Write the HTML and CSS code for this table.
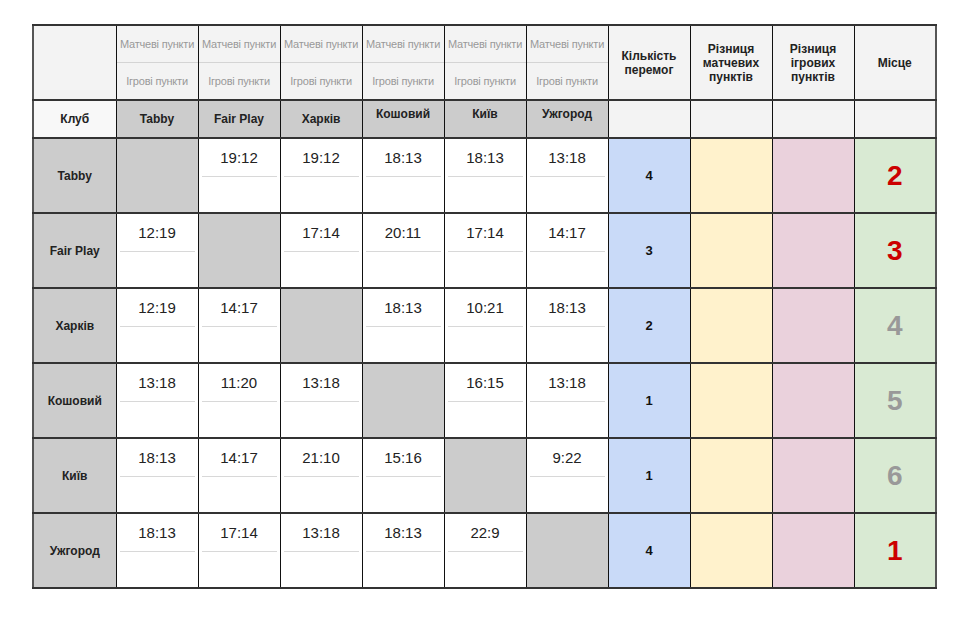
FILE: index.html
```html
<!DOCTYPE html>
<html lang="uk">
<head>
<meta charset="utf-8">
<title>Таблиця</title>
<link rel="stylesheet" href="styles.css">
</head>
<body>
<table class="grid">
  <colgroup>
    <col class="c-first">
    <col class="c"><col class="c"><col class="c"><col class="c"><col class="c"><col class="c">
    <col class="c"><col class="c"><col class="c"><col class="c">
  </colgroup>
  <tr class="r-h1">
    <td class="hd"></td>
    <td class="hd split"><div class="top sub">Матчеві пункти</div><div class="bot sub">Ігрові пункти</div></td>
    <td class="hd split"><div class="top sub">Матчеві пункти</div><div class="bot sub">Ігрові пункти</div></td>
    <td class="hd split"><div class="top sub">Матчеві пункти</div><div class="bot sub">Ігрові пункти</div></td>
    <td class="hd split"><div class="top sub">Матчеві пункти</div><div class="bot sub">Ігрові пункти</div></td>
    <td class="hd split"><div class="top sub">Матчеві пункти</div><div class="bot sub">Ігрові пункти</div></td>
    <td class="hd split"><div class="top sub">Матчеві пункти</div><div class="bot sub">Ігрові пункти</div></td>
    <td class="hd stat-h">Кількість<br>перемог</td>
    <td class="hd stat-h">Різниця<br>матчевих<br>пунктів</td>
    <td class="hd stat-h">Різниця<br>ігрових<br>пунктів</td>
    <td class="hd stat-h">Місце</td>
  </tr>
  <tr class="r-h2">
    <td class="club">Клуб</td>
    <td class="team-h">Tabby</td>
    <td class="team-h">Fair Play</td>
    <td class="team-h">Харків</td>
    <td class="team-h hi">Кошовий</td>
    <td class="team-h hi">Київ</td>
    <td class="team-h hi">Ужгород</td>
    <td class="hd"></td><td class="hd"></td><td class="hd"></td><td class="hd"></td>
  </tr>
  <tr class="r-d">
    <td class="team">Tabby</td>
    <td class="na"></td>
    <td class="sc"><div class="top">19:12</div></td>
    <td class="sc"><div class="top">19:12</div></td>
    <td class="sc"><div class="top">18:13</div></td>
    <td class="sc"><div class="top">18:13</div></td>
    <td class="sc"><div class="top">13:18</div></td>
    <td class="wins">4</td><td class="mp"></td><td class="gp"></td>
    <td class="place red">2</td>
  </tr>
  <tr class="r-d">
    <td class="team">Fair Play</td>
    <td class="sc"><div class="top">12:19</div></td>
    <td class="na"></td>
    <td class="sc"><div class="top">17:14</div></td>
    <td class="sc"><div class="top">20:11</div></td>
    <td class="sc"><div class="top">17:14</div></td>
    <td class="sc"><div class="top">14:17</div></td>
    <td class="wins">3</td><td class="mp"></td><td class="gp"></td>
    <td class="place red">3</td>
  </tr>
  <tr class="r-d">
    <td class="team">Харків</td>
    <td class="sc"><div class="top">12:19</div></td>
    <td class="sc"><div class="top">14:17</div></td>
    <td class="na"></td>
    <td class="sc"><div class="top">18:13</div></td>
    <td class="sc"><div class="top">10:21</div></td>
    <td class="sc"><div class="top">18:13</div></td>
    <td class="wins">2</td><td class="mp"></td><td class="gp"></td>
    <td class="place grey">4</td>
  </tr>
  <tr class="r-d">
    <td class="team">Кошовий</td>
    <td class="sc"><div class="top">13:18</div></td>
    <td class="sc"><div class="top">11:20</div></td>
    <td class="sc"><div class="top">13:18</div></td>
    <td class="na"></td>
    <td class="sc"><div class="top">16:15</div></td>
    <td class="sc"><div class="top">13:18</div></td>
    <td class="wins">1</td><td class="mp"></td><td class="gp"></td>
    <td class="place grey">5</td>
  </tr>
  <tr class="r-d">
    <td class="team">Київ</td>
    <td class="sc"><div class="top">18:13</div></td>
    <td class="sc"><div class="top">14:17</div></td>
    <td class="sc"><div class="top">21:10</div></td>
    <td class="sc"><div class="top">15:16</div></td>
    <td class="na"></td>
    <td class="sc"><div class="top">9:22</div></td>
    <td class="wins">1</td><td class="mp"></td><td class="gp"></td>
    <td class="place grey">6</td>
  </tr>
  <tr class="r-d">
    <td class="team">Ужгород</td>
    <td class="sc"><div class="top">18:13</div></td>
    <td class="sc"><div class="top">17:14</div></td>
    <td class="sc"><div class="top">13:18</div></td>
    <td class="sc"><div class="top">18:13</div></td>
    <td class="sc"><div class="top">22:9</div></td>
    <td class="na"></td>
    <td class="wins">4</td><td class="mp"></td><td class="gp"></td>
    <td class="place red">1</td>
  </tr>
</table>
</body>
</html>
```

FILE: styles.css
```css
html, body {
  margin: 0;
  padding: 0;
  background: #ffffff;
}
body {
  padding: 24px 0 0 32px;
  font-family: "Liberation Sans", Arial, sans-serif;
  color: #222;
}
.grid {
  border-collapse: collapse;
  table-layout: fixed;
  width: 903px;
  border: 2px solid #555;
}
.c-first { width: 83px; }
.c { width: 82px; }
.grid td {
  border-left: 1px solid #111;
  border-right: 1px solid #111;
  border-top: 2px solid #333;
  border-bottom: 2px solid #333;
  padding: 0;
  text-align: center;
  vertical-align: middle;
}
.r-h1 td { height: 72px; }
.r-h2 td { height: 36px; }
.r-d td { height: 73px; }

.hd { background: #f3f3f3; }
.split { vertical-align: top; }
.split .top, .split .bot {
  height: 36px;
  display: flex;
  align-items: center;
  justify-content: center;
}
.split .top { border-bottom: 1px solid #d4d4d4; }
.sub {
  font-size: 11px;
  color: #999;
  white-space: nowrap;
  letter-spacing: -0.2px;
}
.stat-h {
  font-size: 12px;
  font-weight: bold;
  line-height: 14px;
  color: #222;
}
.club {
  background: #f8f8f8;
  font-size: 12px;
  font-weight: bold;
}
.team-h {
  background: #cccccc;
  font-size: 12px;
  font-weight: bold;
}
.r-h2 td.team-h.hi {
  vertical-align: top;
  height: 30px;
  padding-top: 6px;
}
.team {
  background: #cccccc;
  font-size: 12px;
  font-weight: bold;
}
.na { background: #cccccc; }
.grid td.sc {
  background: #fff;
  vertical-align: top;
  padding: 0 3px;
}
.sc .top {
  height: 37px;
  display: flex;
  align-items: center;
  justify-content: center;
  font-size: 15px;
  color: #222;
  border-bottom: 1px solid #d8d8d8;
}
.wins {
  background: #c9daf8;
  font-size: 13px;
  font-weight: bold;
  color: #111;
}
.mp { background: #fff2cc; }
.gp { background: #ead1dc; }
.place {
  background: #d9ead3;
  font-size: 28px;
  font-weight: bold;
}
.red { color: #cc0000; }
.grey { color: #999999; }
```
